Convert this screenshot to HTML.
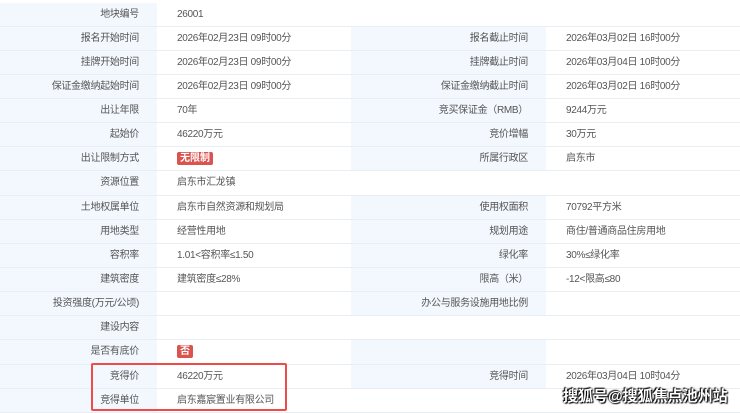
<!DOCTYPE html><html><head><meta charset="utf-8"><style>
body{margin:0;width:740px;height:412px;overflow:hidden;background:#fff;font-family:"Liberation Sans","Noto Sans CJK SC",sans-serif;font-size:10px;letter-spacing:-0.3px;color:#555;position:relative}
.r{position:absolute;left:0;width:740px;height:24px;border-bottom:1px solid #e9eef2;box-sizing:border-box}
.c{position:absolute;top:0;height:23px;line-height:23px;box-sizing:border-box;white-space:nowrap}
.l{background:#f2f8fd;text-align:right;padding-right:18px}
.v{padding-left:20px;background:#fff}
.tag{display:inline-block;background:#d9534f;color:#fff;font-size:10px;line-height:13px;padding:0 3px;border-radius:2px;font-weight:bold;letter-spacing:0}
.box{position:absolute;left:91px;top:363px;width:196px;height:48px;border:2px solid #ee4b4b;box-sizing:border-box;border-radius:2px}
.wm{position:absolute;left:563px;top:385px;font-size:15px;font-weight:bold;color:#fff;letter-spacing:0;white-space:nowrap;text-shadow:0 0 2px #000,1px 1px 1px #000,-1px -1px 1px #000}
</style></head><body>
<div class="r" style="top:3px"><div class="c l" style="left:0;width:157px">地块编号</div><div class="c v" style="left:157px;width:583px">26001</div></div>
<div class="r" style="top:27px"><div class="c l" style="left:0;width:157px">报名开始时间</div><div class="c v" style="left:157px;width:194px">2026年02月23日 09时00分</div><div class="c l" style="left:351px;width:195px">报名截止时间</div><div class="c v" style="left:546px;width:194px">2026年03月02日 16时00分</div></div>
<div class="r" style="top:51px"><div class="c l" style="left:0;width:157px">挂牌开始时间</div><div class="c v" style="left:157px;width:194px">2026年02月23日 09时00分</div><div class="c l" style="left:351px;width:195px">挂牌截止时间</div><div class="c v" style="left:546px;width:194px">2026年03月04日 10时00分</div></div>
<div class="r" style="top:75px"><div class="c l" style="left:0;width:157px">保证金缴纳起始时间</div><div class="c v" style="left:157px;width:194px">2026年02月23日 09时00分</div><div class="c l" style="left:351px;width:195px">保证金缴纳截止时间</div><div class="c v" style="left:546px;width:194px">2026年03月02日 16时00分</div></div>
<div class="r" style="top:99px"><div class="c l" style="left:0;width:157px">出让年限</div><div class="c v" style="left:157px;width:194px">70年</div><div class="c l" style="left:351px;width:195px">竞买保证金（RMB）</div><div class="c v" style="left:546px;width:194px">9244万元</div></div>
<div class="r" style="top:123px"><div class="c l" style="left:0;width:157px">起始价</div><div class="c v" style="left:157px;width:194px">46220万元</div><div class="c l" style="left:351px;width:195px">竞价增幅</div><div class="c v" style="left:546px;width:194px">30万元</div></div>
<div class="r" style="top:147px"><div class="c l" style="left:0;width:157px">出让限制方式</div><div class="c v" style="left:157px;width:194px"><span class="tag">无限制</span></div><div class="c l" style="left:351px;width:195px">所属行政区</div><div class="c v" style="left:546px;width:194px">启东市</div></div>
<div class="r" style="top:171px;height:25px"><div class="c l" style="left:0;width:157px;height:24px;line-height:24px">资源位置</div><div class="c v" style="left:157px;width:583px;height:24px;line-height:24px">启东市汇龙镇</div></div>
<div class="r" style="top:196px"><div class="c l" style="left:0;width:157px">土地权属单位</div><div class="c v" style="left:157px;width:194px">启东市自然资源和规划局</div><div class="c l" style="left:351px;width:195px">使用权面积</div><div class="c v" style="left:546px;width:194px">70792平方米</div></div>
<div class="r" style="top:220px"><div class="c l" style="left:0;width:157px">用地类型</div><div class="c v" style="left:157px;width:194px">经营性用地</div><div class="c l" style="left:351px;width:195px">规划用途</div><div class="c v" style="left:546px;width:194px">商住/普通商品住房用地</div></div>
<div class="r" style="top:244px"><div class="c l" style="left:0;width:157px">容积率</div><div class="c v" style="left:157px;width:194px">1.01&lt;容积率≤1.50</div><div class="c l" style="left:351px;width:195px">绿化率</div><div class="c v" style="left:546px;width:194px">30%≤绿化率</div></div>
<div class="r" style="top:268px"><div class="c l" style="left:0;width:157px">建筑密度</div><div class="c v" style="left:157px;width:194px">建筑密度≤28%</div><div class="c l" style="left:351px;width:195px">限高（米）</div><div class="c v" style="left:546px;width:194px">-12&lt;限高≤80</div></div>
<div class="r" style="top:292px"><div class="c l" style="left:0;width:157px">投资强度(万元/公顷)</div><div class="c v" style="left:157px;width:194px"></div><div class="c l" style="left:351px;width:195px">办公与服务设施用地比例</div><div class="c v" style="left:546px;width:194px"></div></div>
<div class="r" style="top:316px"><div class="c l" style="left:0;width:157px">建设内容</div><div class="c v" style="left:157px;width:583px"></div></div>
<div class="r" style="top:340px;height:25px"><div class="c l" style="left:0;width:157px;height:24px;line-height:24px">是否有底价</div><div class="c v" style="left:157px;width:194px;height:24px;line-height:24px"><span class="tag">否</span></div><div class="c l" style="left:351px;width:195px;height:24px"></div><div class="c v" style="left:546px;width:194px"></div></div>
<div class="r" style="top:365px"><div class="c l" style="left:0;width:157px">竞得价</div><div class="c v" style="left:157px;width:194px">46220万元</div><div class="c l" style="left:351px;width:195px">竞得时间</div><div class="c v" style="left:546px;width:194px">2026年03月04日 10时04分</div></div>
<div class="r" style="top:389px"><div class="c l" style="left:0;width:157px">竞得单位</div><div class="c v" style="left:157px;width:583px">启东嘉宸置业有限公司</div></div>
<div class="box"></div>
<div class="wm">搜狐号@搜狐焦点池州站</div>
</body></html>
